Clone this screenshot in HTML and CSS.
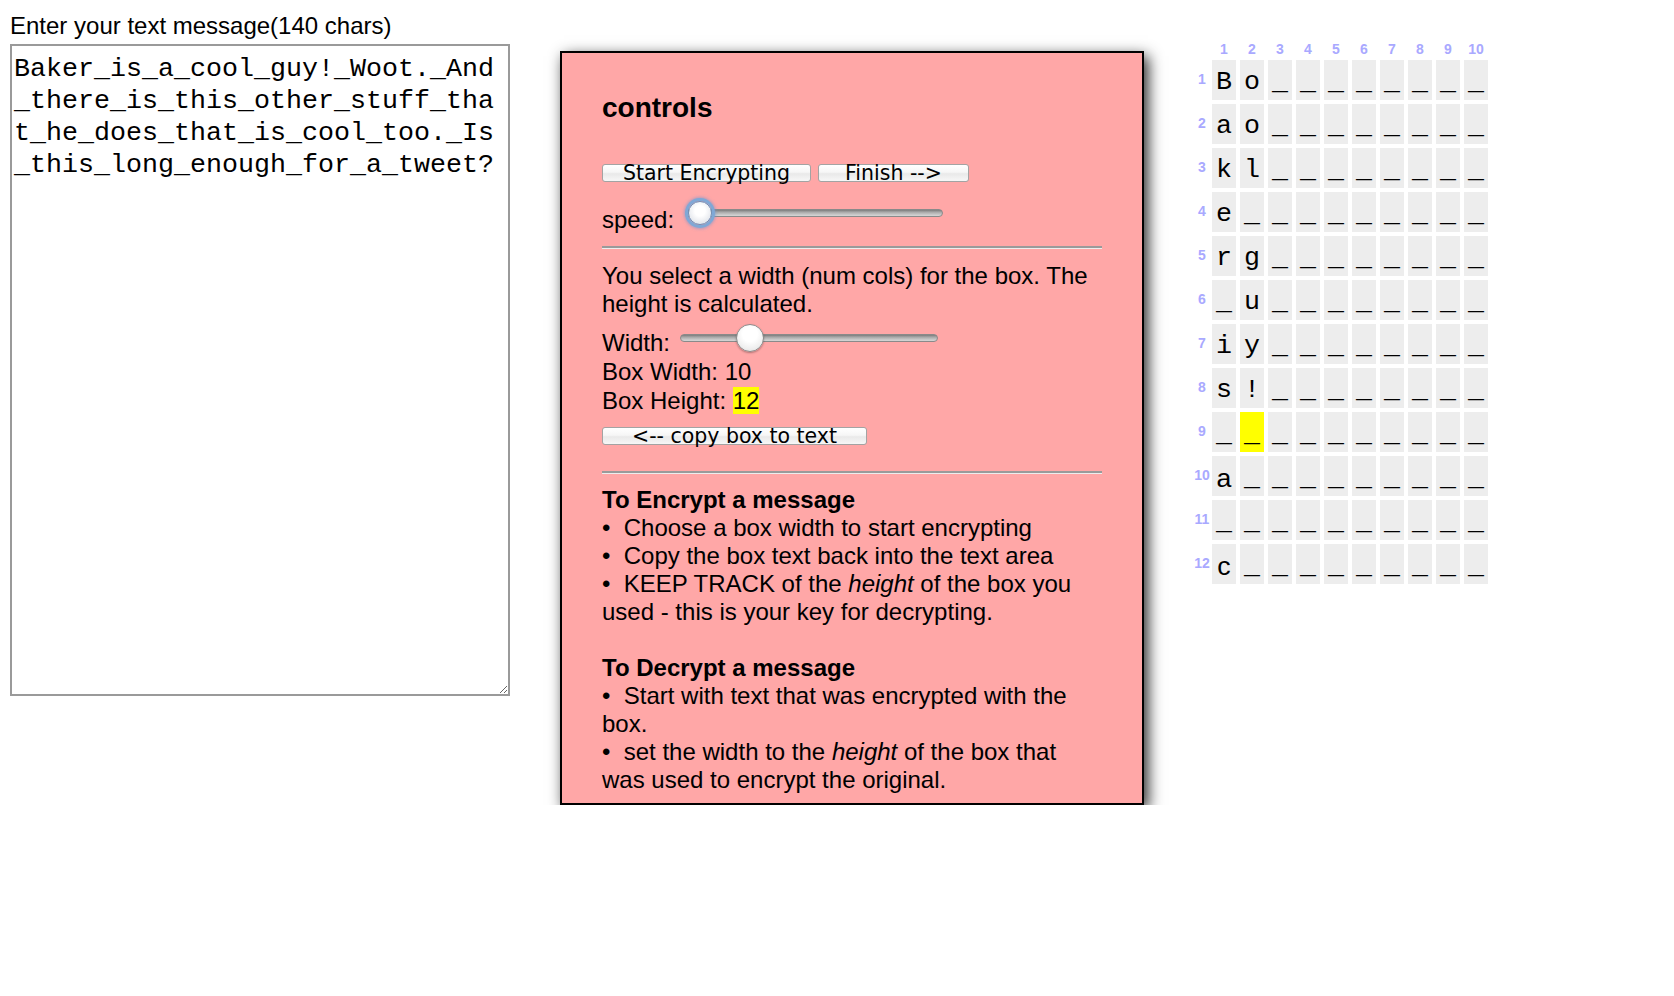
FILE: index.html
```html
<!DOCTYPE html>
<html>
<head>
<meta charset="utf-8">
<title>Box Cipher</title>
<link rel="stylesheet" href="styles.css">
</head>
<body>
<div class="page">
  <div class="left">
    <div class="label">Enter your text message(140 chars)</div>
    <textarea class="msg" spellcheck="false">Baker_is_a_cool_guy!_Woot._And_there_is_this_other_stuff_that_he_does_that_is_cool_too._Is_this_long_enough_for_a_tweet?</textarea>
  </div>

  <div class="panel">
    <h3 class="title">controls</h3>
    <div class="btnrow">
      <span class="btn btn-start">Start Encrypting</span>
      <span class="btn btn-finish">Finish --&gt;</span>
    </div>
    <div class="slrow speedrow">
      <span class="sllabel">speed:</span>
      <div class="slider speed">
        <div class="track"></div>
        <div class="thumb thumb-focus"></div>
      </div>
    </div>
    <div class="rule"></div>
    <div class="para">You select a width (num cols) for the box. The height is calculated.</div>
    <div class="slrow widthrow">
      <span>Width:</span>
      <div class="slider wslider">
        <div class="track"></div>
        <div class="thumb thumb-plain"></div>
      </div>
    </div>
    <div class="line line-bw">Box Width: 10</div>
    <div class="line line-bh">Box Height: <span class="hl">12</span></div>
    <div class="btnrow copyrow">
      <span class="btn btn-copy">&lt;-- copy box to text</span>
    </div>
    <div class="rule rule2"></div>
    <div class="help">
      <b>To Encrypt a message</b><br>
      •&nbsp; Choose a box width to start encrypting<br>
      •&nbsp; Copy the box text back into the text area<br>
      •&nbsp; KEEP TRACK of the <i>height</i> of the box you used - this is your key for decrypting.<br>
      <br>
      <b>To Decrypt a message</b><br>
      •&nbsp; Start with text that was encrypted with the box.<br>
      •&nbsp; set the width to the <i>height</i> of the box that was used to encrypt the original.
    </div>
  </div>

  <div class="grid">
    <div class="grow head">
      <span class="rl"></span>
      <div class="cells">
        <span class="hc">1</span><span class="hc">2</span><span class="hc">3</span><span class="hc">4</span><span class="hc">5</span><span class="hc">6</span><span class="hc">7</span><span class="hc">8</span><span class="hc">9</span><span class="hc">10</span>
      </div>
    </div>
    <div class="grow"><span class="rl">1</span><div class="cells"><span class="c">B</span><span class="c">o</span><span class="c">_</span><span class="c">_</span><span class="c">_</span><span class="c">_</span><span class="c">_</span><span class="c">_</span><span class="c">_</span><span class="c">_</span></div></div>
    <div class="grow"><span class="rl">2</span><div class="cells"><span class="c">a</span><span class="c">o</span><span class="c">_</span><span class="c">_</span><span class="c">_</span><span class="c">_</span><span class="c">_</span><span class="c">_</span><span class="c">_</span><span class="c">_</span></div></div>
    <div class="grow"><span class="rl">3</span><div class="cells"><span class="c">k</span><span class="c">l</span><span class="c">_</span><span class="c">_</span><span class="c">_</span><span class="c">_</span><span class="c">_</span><span class="c">_</span><span class="c">_</span><span class="c">_</span></div></div>
    <div class="grow"><span class="rl">4</span><div class="cells"><span class="c">e</span><span class="c">_</span><span class="c">_</span><span class="c">_</span><span class="c">_</span><span class="c">_</span><span class="c">_</span><span class="c">_</span><span class="c">_</span><span class="c">_</span></div></div>
    <div class="grow"><span class="rl">5</span><div class="cells"><span class="c">r</span><span class="c">g</span><span class="c">_</span><span class="c">_</span><span class="c">_</span><span class="c">_</span><span class="c">_</span><span class="c">_</span><span class="c">_</span><span class="c">_</span></div></div>
    <div class="grow"><span class="rl">6</span><div class="cells"><span class="c">_</span><span class="c">u</span><span class="c">_</span><span class="c">_</span><span class="c">_</span><span class="c">_</span><span class="c">_</span><span class="c">_</span><span class="c">_</span><span class="c">_</span></div></div>
    <div class="grow"><span class="rl">7</span><div class="cells"><span class="c">i</span><span class="c">y</span><span class="c">_</span><span class="c">_</span><span class="c">_</span><span class="c">_</span><span class="c">_</span><span class="c">_</span><span class="c">_</span><span class="c">_</span></div></div>
    <div class="grow"><span class="rl">8</span><div class="cells"><span class="c">s</span><span class="c">!</span><span class="c">_</span><span class="c">_</span><span class="c">_</span><span class="c">_</span><span class="c">_</span><span class="c">_</span><span class="c">_</span><span class="c">_</span></div></div>
    <div class="grow"><span class="rl">9</span><div class="cells"><span class="c">_</span><span class="c cur">_</span><span class="c">_</span><span class="c">_</span><span class="c">_</span><span class="c">_</span><span class="c">_</span><span class="c">_</span><span class="c">_</span><span class="c">_</span></div></div>
    <div class="grow"><span class="rl">10</span><div class="cells"><span class="c sans">a</span><span class="c">_</span><span class="c">_</span><span class="c">_</span><span class="c">_</span><span class="c">_</span><span class="c">_</span><span class="c">_</span><span class="c">_</span><span class="c">_</span></div></div>
    <div class="grow"><span class="rl">11</span><div class="cells"><span class="c">_</span><span class="c">_</span><span class="c">_</span><span class="c">_</span><span class="c">_</span><span class="c">_</span><span class="c">_</span><span class="c">_</span><span class="c">_</span><span class="c">_</span></div></div>
    <div class="grow"><span class="rl">12</span><div class="cells"><span class="c sans">c</span><span class="c">_</span><span class="c">_</span><span class="c">_</span><span class="c">_</span><span class="c">_</span><span class="c">_</span><span class="c">_</span><span class="c">_</span><span class="c">_</span></div></div>
  </div>
</div>
</body>
</html>
```

FILE: styles.css
```css
html, body {
  margin: 0;
  padding: 0;
  background: #ffffff;
}

body {
  font-family: "Liberation Sans", Arial, sans-serif;
  font-size: 24px;
  line-height: 28px;
  color: #000;
}

.page {
  display: flex;
  align-items: flex-start;
  padding: 8px 0 0 10px;
}

/* left column */
.left {
  width: 500px;
  flex: none;
}

.label {
  padding-top: 4px;
  line-height: 28px;
}

.msg {
  display: block;
  margin: 4px 0 0 0;
  width: 500px;
  height: 652px;
  box-sizing: border-box;
  border: 2px solid #9a9a9a;
  padding: 7px 2px;
  font-family: "Liberation Mono", "Courier New", monospace;
  font-size: 26.67px;
  line-height: 32px;
  color: #000;
  background: #fff;
  outline: none;
  overflow: auto;
}

/* controls panel */
.panel {
  flex: none;
  width: 584px;
  box-sizing: border-box;
  margin: 43px 0 0 50px;
  padding: 39px 40px 9px 40px;
  background: #ffa7a7;
  border: 2px solid #000;
  box-shadow: 4px 5px 14px rgba(0, 0, 0, 0.85);
}

.title {
  margin: 0;
  font-size: 28px;
  line-height: 32px;
  font-weight: bold;
}

.btnrow {
  display: flex;
  gap: 7px;
  height: 18px;
  margin-top: 40px;
}

.btn {
  display: block;
  box-sizing: border-box;
  height: 18px;
  border: 1px solid #a3a3a3;
  border-radius: 3px;
  background: linear-gradient(#ffffff, #f6f6f6 45%, #e9e9e9 55%, #f7f7f7);
  font-family: "DejaVu Sans", "Liberation Sans", sans-serif;
  font-size: 20.5px;
  line-height: 16px;
  text-align: center;
  white-space: nowrap;
  overflow: visible;
  color: #000;
}

.btn-start { width: 209px; }
.btn-finish { width: 151px; }
.btn-copy { width: 265px; }

.copyrow {
  margin-top: 12px;
}

.slrow {
  display: flex;
  align-items: flex-start;
  line-height: 28px;
}

.sllabel {
  padding-top: 3px;
  margin-bottom: -3px;
}

.speedrow {
  margin-top: 21px;
}

.widthrow {
  margin-top: 11px;
}

.slider {
  position: relative;
  width: 258px;
  height: 20px;
  flex: none;
}

.speed {
  margin-left: 11px;
}

.wslider {
  margin-left: 10px;
  height: 18px;
}

.track {
  position: absolute;
  left: 0;
  right: 0;
  top: 50%;
  height: 8px;
  margin-top: -4px;
  box-sizing: border-box;
  border: 1px solid #8a8a8a;
  border-radius: 4px;
  background: linear-gradient(#7c7c7c, #a8a8a8 35%, #c4c4c4 70%, #d6d6d6);
}

.thumb {
  position: absolute;
  top: 50%;
  border-radius: 50%;
  box-sizing: border-box;
}

.thumb-focus {
  left: 3px;
  width: 24px;
  height: 24px;
  margin-top: -12px;
  border: 1px solid #6f8fb8;
  background: radial-gradient(circle at 50% 40%, #ffffff 30%, #e6e9ee 70%, #cfd6e0);
  box-shadow: 0 0 0 3px #7fa8d6, 0 0 3px 4px rgba(110, 150, 210, 0.55);
}

.thumb-plain {
  left: 56px;
  width: 28px;
  height: 28px;
  margin-top: -14px;
  border: 1px solid #8c8c8c;
  background: radial-gradient(circle at 50% 35%, #ffffff 35%, #eeeeee 70%, #d4d4d4);
  box-shadow: 0 1px 2px rgba(0, 0, 0, 0.3);
}

.rule {
  margin-top: 15px;
  height: 0;
  border-top: 2px solid #9a9a9a;
  border-bottom: 1px solid #ededed;
}

.rule2 {
  margin-top: 26px;
}

.para {
  margin-top: 13px;
}

.line {
  line-height: 28px;
}

.line-bw {
  margin-top: 1px;
}

.line-bh {
  margin-top: 1px;
}

.hl {
  background: #ffff00;
}

.help {
  margin-top: 12px;
  line-height: 28px;
}

/* grid */
.grid {
  flex: none;
  margin: 33px 0 0 48px;
  display: flex;
  flex-direction: column;
  gap: 4px;
}

.grow {
  display: flex;
}

.head {
  height: 16px;
  margin-bottom: -1px;
}

.rl {
  width: 20px;
  flex: none;
  box-sizing: border-box;
  padding-top: 11px;
  text-align: center;
  font-size: 14px;
  line-height: 16px;
  font-weight: bold;
  color: #a9a9ff;
}

.cells {
  display: flex;
  gap: 4px;
}

.hc {
  width: 24px;
  text-align: center;
  font-size: 14px;
  line-height: 16px;
  font-weight: bold;
  color: #a9a9ff;
}

.c {
  width: 24px;
  height: 40px;
  box-sizing: border-box;
  padding-top: 4px;
  background: #ededed;
  text-align: center;
  font-family: "Liberation Mono", "Courier New", monospace;
  font-size: 26.67px;
  line-height: 36px;
  color: #000;
  white-space: pre;
  overflow: visible;
}

.c.sans {
  font-family: "Liberation Sans", Arial, sans-serif;
}

.c.cur {
  background: #ffff00;
}
```
